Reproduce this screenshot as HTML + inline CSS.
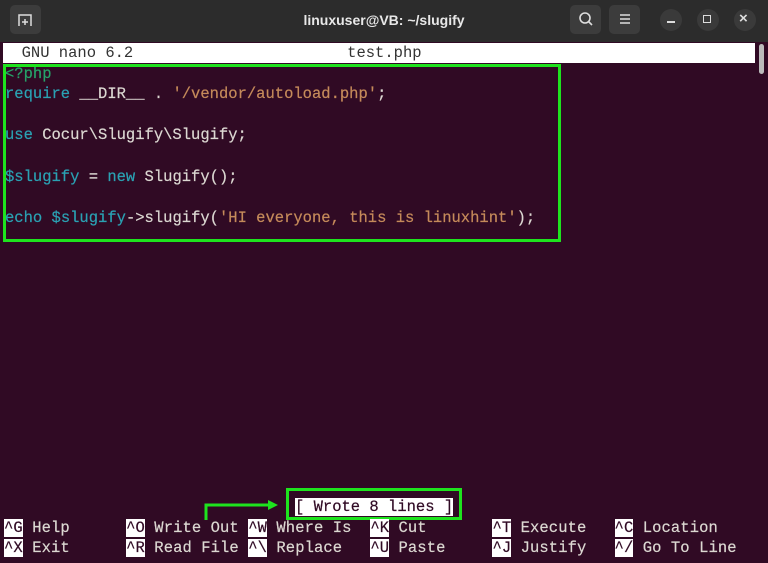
<!DOCTYPE html>
<html><head><style>
body{margin:0;width:768px;height:563px;background:#300a24;overflow:hidden;position:relative;font-family:"Liberation Mono",monospace}
.tb{position:absolute;left:0;top:0;width:768px;height:42px;background:#2c2c2c}
.btn{position:absolute;top:5px;width:31px;height:29px;background:#3c3c3c;border-radius:5px}
.cir{position:absolute;top:9px;width:22px;height:22px;border-radius:50%;background:#3a3a3a}
.title{position:absolute;top:12px;left:0;width:768px;text-align:center;color:#e8e8e8;font:bold 14px "Liberation Sans",sans-serif}
.hdr{position:absolute;left:3px;top:43px;width:752px;height:20px;background:#fff;color:#333;font-size:15.5px;line-height:20px;white-space:pre}
.sb{position:absolute;left:759px;top:44px;width:5px;height:30px;background:#bbb;border-radius:3px}
.ln{position:absolute;left:5px;font-size:15.5px;line-height:20px;white-space:pre;color:#dcd8d2;-webkit-text-stroke:0.2px currentColor}
.k{color:#2aa1b3}.g{color:#26a269}.s{color:#c58a5a}
.box{position:absolute;border:3px solid #1ee31e}
.inv{background:#fff;color:#300a24}
.bt{letter-spacing:0.09px}
</style></head><body>
<div class="tb"></div>
<div class="btn" style="left:10px"></div>
<svg style="position:absolute;left:17px;top:12px" width="16" height="16"><path d="M2 14V3h12v11M8 7v6M5 10h6" stroke="#ddd" stroke-width="1.5" fill="none"/></svg>
<div class="title">linuxuser@VB: ~/slugify</div>
<div class="btn" style="left:570px"></div>
<svg style="position:absolute;left:578px;top:11px" width="16" height="16"><circle cx="7" cy="7" r="5" stroke="#ddd" stroke-width="1.6" fill="none"/><path d="M11 11l3 3" stroke="#ddd" stroke-width="1.6"/></svg>
<div class="btn" style="left:609px"></div>
<svg style="position:absolute;left:617px;top:11px" width="16" height="16"><path d="M3 4h10M3 8h10M3 12h10" stroke="#ddd" stroke-width="1.5"/></svg>
<div class="cir" style="left:660px"></div><div style="position:absolute;left:667px;top:21px;width:8px;height:1.5px;background:#ddd"></div>
<div class="cir" style="left:697px"></div><div style="position:absolute;left:703px;top:15px;width:8px;height:8px;border:1.5px solid #ddd;box-sizing:border-box"></div>
<div class="cir" style="left:734px"></div><div style="position:absolute;left:739px;top:10px;color:#ddd;font:bold 15px 'Liberation Sans'">×</div>
<div class="hdr">  GNU nano 6.2                       test.php</div>
<div class="sb"></div>
<div class="ln" style="top:64px"><span class="g">&lt;?php</span></div>
<div class="ln" style="top:84px"><span class="k">require</span> __DIR__ . <span class="s">'/vendor/autoload.php'</span>;</div>
<div class="ln" style="top:125px"><span class="k">use</span> Cocur\Slugify\Slugify;</div>
<div class="ln" style="top:167px"><span class="k">$slugify</span> = <span class="k">new</span> Slugify();</div>
<div class="ln" style="top:208px"><span class="k">echo</span> <span class="k">$slugify</span>-&gt;slugify(<span class="s">'HI everyone, this is linuxhint'</span>);</div>
<div class="box" style="left:3px;top:64px;width:552px;height:172px"></div>
<div class="ln" style="top:497px;left:295px"><span class="inv">[ Wrote 8 lines ]</span></div>
<div class="box" style="left:286px;top:488px;width:170px;height:26px"></div>
<svg style="position:absolute;left:200px;top:498px" width="90" height="25"><path d="M6 22V7h64" stroke="#1ee31e" stroke-width="3" fill="none"/><path d="M68 2l10 5-10 5z" fill="#1ee31e"/></svg>
<div class="ln bt" style="top:518px;left:4px"><span class="inv">^G</span> Help      <span class="inv">^O</span> Write Out <span class="inv">^W</span> Where Is  <span class="inv">^K</span> Cut       <span class="inv">^T</span> Execute   <span class="inv">^C</span> Location</div>
<div class="ln bt" style="top:538px;left:4px"><span class="inv">^X</span> Exit      <span class="inv">^R</span> Read File <span class="inv">^\</span> Replace   <span class="inv">^U</span> Paste     <span class="inv">^J</span> Justify   <span class="inv">^/</span> Go To Line</div>
</body></html>
